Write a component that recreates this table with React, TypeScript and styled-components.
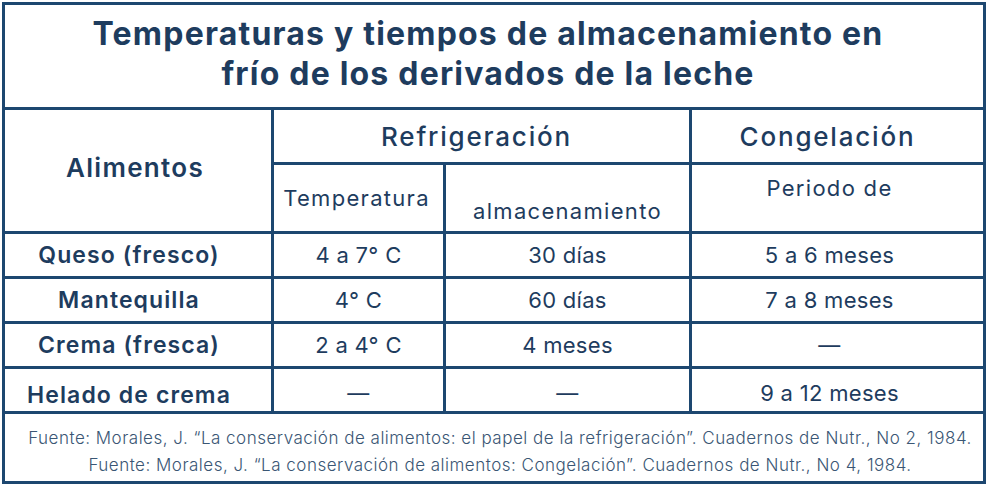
import React from "react";
import styled, { createGlobalStyle } from "styled-components";

const Global = createGlobalStyle`
  html, body { margin: 0; padding: 0; background: #ffffff; }
  body { font-family: Inter, "Noto Sans", sans-serif; color: #1f3d5e; }
`;

const NAVY = "#1d4770";
const INK = "#1e3c5e";

const Frame = styled.div`
  padding: 2px 1px 0 2px;
`;

const Table = styled.table`
  width: 984px;
  border-collapse: collapse;
  table-layout: fixed;
  border: 3px solid ${NAVY};
`;

const Cell = styled.td<{ $align?: "top" | "middle" | "bottom"; $pad?: string }>`
  border: 3px solid ${NAVY};
  text-align: center;
  vertical-align: ${(p) => p.$align || "middle"};
  padding: ${(p) => p.$pad || "0"};
  color: ${INK};
  white-space: nowrap;
`;

const TitleCell = styled(Cell)`
  font-size: 32px;
  font-weight: 700;
  line-height: 40px;
  letter-spacing: 1.2px;
`;

const GroupHead = styled(Cell)`
  font-size: 26px;
  font-weight: 500;
  letter-spacing: 1.8px;
`;

const FoodHead = styled(Cell)`
  font-size: 26px;
  font-weight: 600;
  letter-spacing: 1.3px;
`;

const SubHead = styled(Cell)`
  font-size: 22px;
  font-weight: 400;
  letter-spacing: 1.3px;
`;

const FoodCell = styled(Cell)`
  font-size: 23px;
  font-weight: 600;
  letter-spacing: 1.1px;
`;

const ValueCell = styled(Cell)`
  font-size: 22px;
  font-weight: 400;
  letter-spacing: 0.3px;
`;

const SourceCell = styled(Cell)`
  font-size: 17px;
  font-weight: 300;
  line-height: 27px;
  letter-spacing: 0.5px;
  color: #3a5674;
`;

const Row = styled.tr<{ $h: number }>`
  height: ${(p) => p.$h}px;
`;

const rows = [
  { food: "Queso (fresco)", temp: "4 a 7° C", fridge: "30 días", freeze: "5 a 6 meses" },
  { food: "Mantequilla", temp: "4° C", fridge: "60 días", freeze: "7 a 8 meses" },
  { food: "Crema (fresca)", temp: "2 a 4° C", fridge: "4 meses", freeze: "—" },
  { food: "Helado de crema", temp: "—", fridge: "—", freeze: "9 a 12 meses" },
];

export default function App() {
  return (
    <Frame>
      <Global />
      <Table>
        <colgroup>
          <col style={{ width: 269 }} />
          <col style={{ width: 172 }} />
          <col style={{ width: 246 }} />
          <col />
        </colgroup>
        <tbody>
          <Row $h={105}>
            <TitleCell colSpan={4} $pad="0 12px 4px 0">
              Temperaturas y tiempos de almacenamiento en
              <br />
              frío de los derivados de la leche
            </TitleCell>
          </Row>
          <Row $h={55}>
            <FoodHead rowSpan={2} $pad="0 6px 6px 0">Alimentos</FoodHead>
            <GroupHead colSpan={2} $pad="0 10px 0 0">Refrigeración</GroupHead>
            <GroupHead $pad="0 20px 0 0">Congelación</GroupHead>
          </Row>
          <Row $h={69}>
            <SubHead $pad="0 4px 0 0">Temperatura</SubHead>
            <SubHead $pad="26px 0 0 0">almacenamiento</SubHead>
            <SubHead $align="top" $pad="10px 16px 0 0">Periodo de</SubHead>
          </Row>
          {rows.map((r, i) => {
            const last = i === rows.length - 1;
            const top = last ? "6px" : "0";
            return (
              <Row $h={45} key={r.food}>
                <FoodCell $pad={`${last ? "9px" : "0"} 18px 0 0`}>{r.food}</FoodCell>
                <ValueCell $pad={`${top} 0 0 0`}>{r.temp}</ValueCell>
                <ValueCell $pad={`${top} 0 0 0`}>{r.fridge}</ValueCell>
                <ValueCell $pad={`${top} 16px 0 0`}>{r.freeze}</ValueCell>
              </Row>
            );
          })}
          <Row $h={70}>
            <SourceCell colSpan={4} $pad="8px 0 0 12px">
              Fuente: Morales, J. “La conservación de alimentos: el papel de la refrigeración”. Cuadernos de Nutr., No 2, 1984.
              <br />
              Fuente: Morales, J. “La conservación de alimentos: Congelación”. Cuadernos de Nutr., No 4, 1984.
            </SourceCell>
          </Row>
        </tbody>
      </Table>
    </Frame>
  );
}
